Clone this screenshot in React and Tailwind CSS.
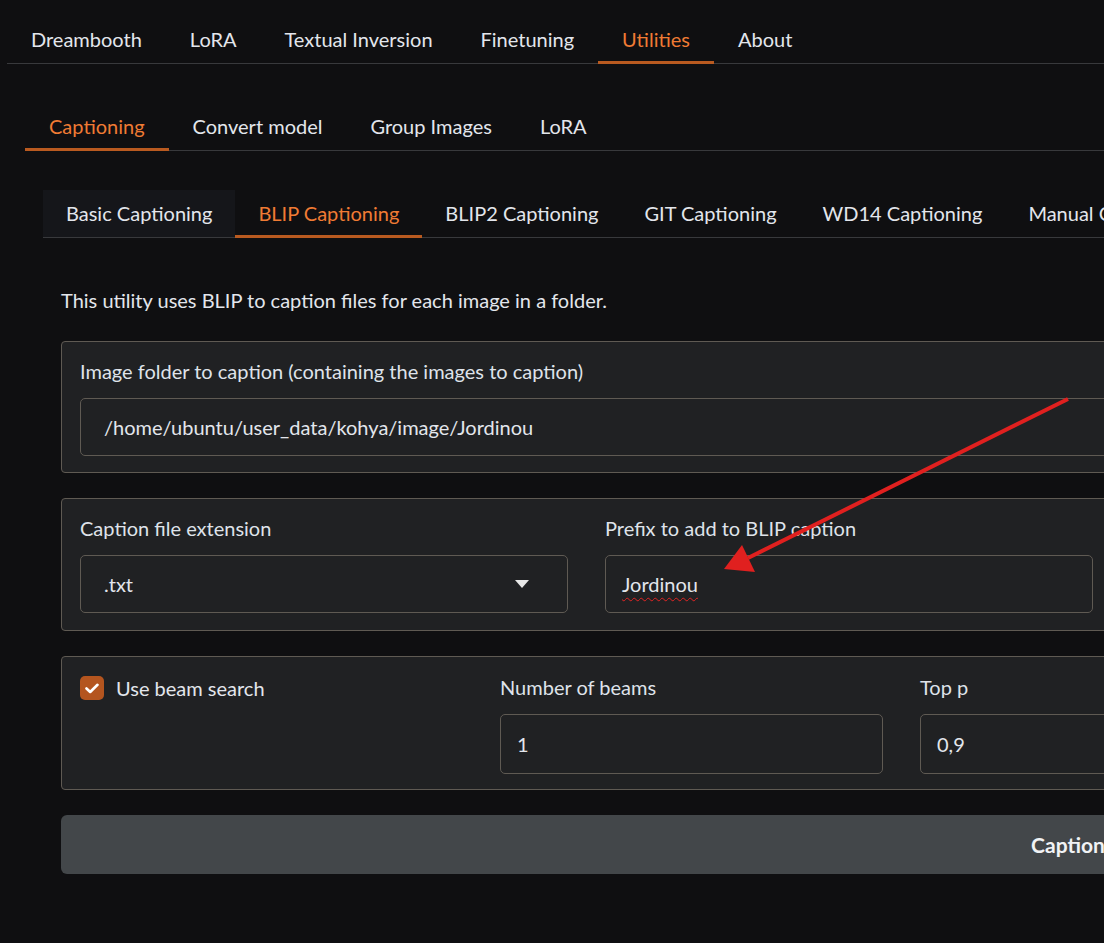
import React from 'react';

const font = { fontFamily: 'Lato, "Noto Sans", sans-serif' };

const Tab = ({ label, active, filled, tight }) => (
    <div
        className={`relative h-[47px] ${tight ? 'px-[23px]' : 'px-6'} pb-[2px] flex items-center text-[20px] whitespace-nowrap ${active ? 'text-[#f07b34]' : 'text-[#e3e6ec]'} ${filled ? 'bg-[#15161a]' : ''}`}
    >
        {label}
        {active && <span className="absolute left-0 right-0 -bottom-px h-[3px] bg-[#b95a20]" />}
    </div>
);

const TabBar = ({ tabs, active, filled, tight }) => (
    <div className="flex border-b border-[#38393c]">
        {tabs.map((t) => (
            <Tab key={t} label={t} active={t === active} filled={t === filled} tight={tight} />
        ))}
    </div>
);

const Box = ({ children, className = '' }) => (
    <div className={`rounded-[4px] border border-[#5f5a53] bg-[#202123] px-[18px] ${className}`}>
        {children}
    </div>
);

const Label = ({ children }) => (
    <div className="h-[27px] leading-[27px] text-[20px] text-[#dfe3ea] whitespace-nowrap">{children}</div>
);

const Field = ({ children, className = '' }) => (
    <div className={`mt-[13px] rounded-[5px] border border-[#5f5a53] bg-[#202123] flex items-center text-[20px] text-[#e3e6ec] ${className}`}>
        {children}
    </div>
);

export default function App() {
    return (
        <div className="relative w-[1104px] h-[943px] overflow-hidden bg-[#0f0f11]" style={font}>
            <div className="w-[2200px] pl-[7px] pt-[16px]">
                <TabBar
                    tabs={['Dreambooth', 'LoRA', 'Textual Inversion', 'Finetuning', 'Utilities', 'About']}
                    active="Utilities"
                />
                <div className="pl-[18px] pt-[39px]">
                    <TabBar tabs={['Captioning', 'Convert model', 'Group Images', 'LoRA']} active="Captioning" />
                    <div className="pl-[18px] pt-[39px]">
                        <TabBar
                            tabs={['Basic Captioning', 'BLIP Captioning', 'BLIP2 Captioning', 'GIT Captioning', 'WD14 Captioning', 'Manual Captioning']}
                            active="BLIP Captioning"
                            filled="Basic Captioning"
                            tight
                        />
                        <div className="pl-[18px] w-[2093px]">
                            <p className="mt-[49px] h-[27px] leading-[27px] text-[20px] text-[#e3e6ec]">
                                This utility uses BLIP to caption files for each image in a folder.
                            </p>

                            <Box className="mt-[27px] pt-[16px] pb-[16px]">
                                <Label>Image folder to caption (containing the images to caption)</Label>
                                <Field className="h-[58px] pl-[23px]">/home/ubuntu/user_data/kohya/image/Jordinou</Field>
                            </Box>

                            <Box className="mt-[25px] pt-[16px] pb-[17px]">
                                <div className="flex gap-[37px]">
                                    <div className="w-[488px]">
                                        <Label>Caption file extension</Label>
                                        <Field className="h-[58px] pl-[23px] pr-[38px] justify-between">
                                            <span>.txt</span>
                                            <svg width="14" height="8" viewBox="0 0 14 8">
                                                <path d="M0 0 L14 0 L7 8 Z" fill="#e8e8e8" />
                                            </svg>
                                        </Field>
                                    </div>
                                    <div className="w-[488px]">
                                        <Label>Prefix to add to BLIP caption</Label>
                                        <Field className="h-[58px] pl-[16px]">
                                            <span className="underline decoration-wavy decoration-[#e02424] decoration-1 underline-offset-[5px]">Jordinou</span>
                                        </Field>
                                    </div>
                                    <div className="w-[488px]">
                                        <Label>Postfix to add to BLIP caption</Label>
                                        <Field className="h-[58px]" />
                                    </div>
                                </div>
                            </Box>

                            <Box className="mt-[25px] pt-[17px] pb-[15px]">
                                <div className="flex gap-[37px]">
                                    <div className="w-[383px] flex items-start gap-3 pt-[2px]">
                                        <div className="w-[24px] h-[24px] rounded-[5px] bg-[#b4551f] flex items-center justify-center">
                                            <svg width="14" height="11" viewBox="0 0 14 11">
                                                <path d="M1.5 5.5 L5.2 9 L12.5 1.8" stroke="#fff" strokeWidth="2.6" fill="none" strokeLinecap="round" strokeLinejoin="round" />
                                            </svg>
                                        </div>
                                        <span className="text-[20px] leading-[24px] text-[#e3e6ec]">Use beam search</span>
                                    </div>
                                    <div className="w-[383px]">
                                        <Label>Number of beams</Label>
                                        <Field className="pl-[16px] h-[60px]">1</Field>
                                    </div>
                                    <div className="w-[383px]">
                                        <Label>Top p</Label>
                                        <Field className="pl-[16px] h-[60px]">0,9</Field>
                                    </div>
                                    <div className="w-[383px]">
                                        <Label>Max length</Label>
                                        <Field className="pl-[16px] h-[60px]">75</Field>
                                    </div>
                                </div>
                            </Box>

                            <button className="mt-[25px] w-[2084px] h-[59px] rounded-[6px] bg-[#43474a] text-[21px] font-bold text-[#f1f3f5]">
                                Caption images
                            </button>
                        </div>
                    </div>
                </div>
            </div>

            {/* annotation arrow */}
            <svg className="absolute left-0 top-0 pointer-events-none" width="1104" height="943">
                <line x1="1068" y1="399" x2="748" y2="558" stroke="#e0201f" strokeWidth="4" />
                <polygon points="724,569 742,545 755,572" fill="#e0201f" />
            </svg>
        </div>
    );
}
